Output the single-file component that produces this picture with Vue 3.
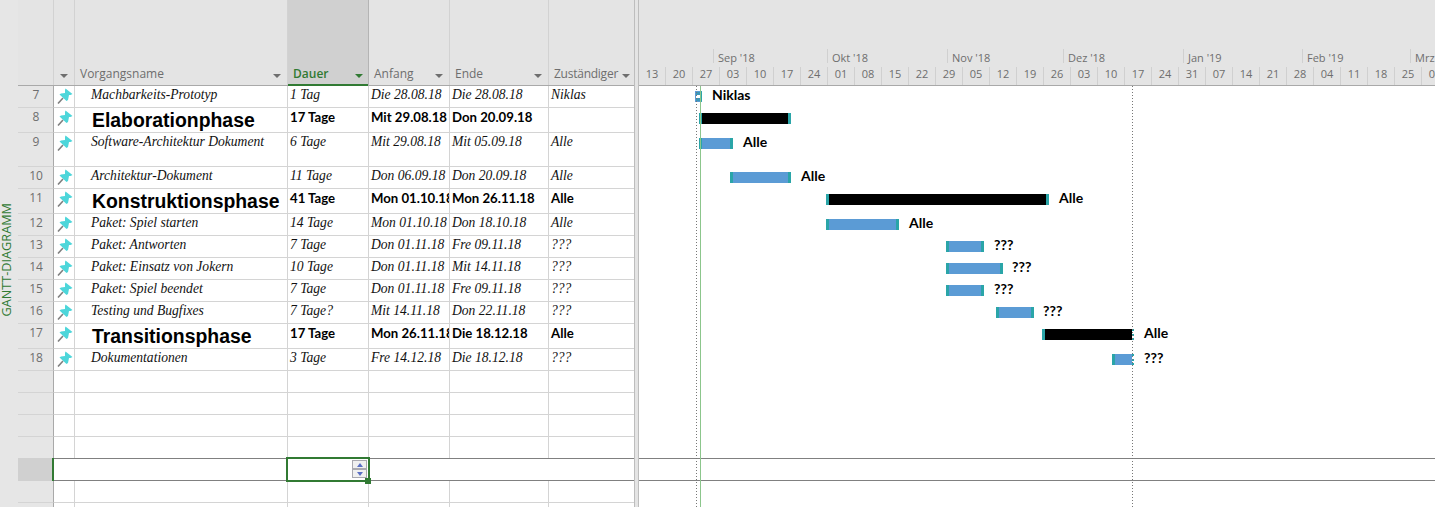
<script setup>
const columns = [
  { key: 'name', label: 'Vorgangsname' },
  { key: 'dauer', label: 'Dauer', active: true },
  { key: 'anfang', label: 'Anfang' },
  { key: 'ende', label: 'Ende' },
  { key: 'who', label: 'Zuständiger' }
]

const rows = [
  { id: 7, h: 22, name: 'Machbarkeits-Prototyp', dauer: '1 Tag', anfang: 'Die 28.08.18', ende: 'Die 28.08.18', who: 'Niklas', milestone: 695, label: 712, text: 'Niklas' },
  { id: 8, h: 25, phase: true, name: 'Elaborationphase', dauer: '17 Tage', anfang: 'Mit 29.08.18', ende: 'Don 20.09.18', who: '', from: 699, to: 791 },
  { id: 9, h: 34, name: 'Software-Architektur Dokument', dauer: '6 Tage', anfang: 'Mit 29.08.18', ende: 'Mit 05.09.18', who: 'Alle', from: 699, to: 733, label: 743, text: 'Alle' },
  { id: 10, h: 22, name: 'Architektur-Dokument', dauer: '11 Tage', anfang: 'Don 06.09.18', ende: 'Don 20.09.18', who: 'Alle', from: 730, to: 791, label: 801, text: 'Alle' },
  { id: 11, h: 25, phase: true, name: 'Konstruktionsphase', dauer: '41 Tage', anfang: 'Mon 01.10.18', ende: 'Mon 26.11.18', who: 'Alle', from: 826, to: 1049, label: 1059, text: 'Alle' },
  { id: 12, h: 22, name: 'Paket: Spiel starten', dauer: '14 Tage', anfang: 'Mon 01.10.18', ende: 'Don 18.10.18', who: 'Alle', from: 826, to: 899, label: 909, text: 'Alle' },
  { id: 13, h: 22, name: 'Paket: Antworten', dauer: '7 Tage', anfang: 'Don 01.11.18', ende: 'Fre 09.11.18', who: '???', from: 946, to: 984, label: 994, text: '???' },
  { id: 14, h: 22, name: 'Paket: Einsatz von Jokern', dauer: '10 Tage', anfang: 'Don 01.11.18', ende: 'Mit 14.11.18', who: '???', from: 946, to: 1003, label: 1012, text: '???' },
  { id: 15, h: 22, name: 'Paket: Spiel beendet', dauer: '7 Tage', anfang: 'Don 01.11.18', ende: 'Fre 09.11.18', who: '???', from: 946, to: 984, label: 994, text: '???' },
  { id: 16, h: 22, name: 'Testing und Bugfixes', dauer: '7 Tage?', anfang: 'Mit 14.11.18', ende: 'Don 22.11.18', who: '???', from: 996, to: 1034, label: 1043, text: '???' },
  { id: 17, h: 25, phase: true, name: 'Transitionsphase', dauer: '17 Tage', anfang: 'Mon 26.11.18', ende: 'Die 18.12.18', who: 'Alle', from: 1042, to: 1134, cut: true, label: 1144, text: 'Alle' },
  { id: 18, h: 22, name: 'Dokumentationen', dauer: '3 Tage', anfang: 'Fre 14.12.18', ende: 'Die 18.12.18', who: '???', from: 1112, to: 1134, cut: true, label: 1144, text: '???' }
]

const emptyBefore = [1, 2, 3, 4]
const emptyAfter = [1, 2]

const months = [
  { label: "Sep '18", w: 114 },
  { label: "Okt '18", w: 120 },
  { label: "Nov '18", w: 116 },
  { label: "Dez '18", w: 120 },
  { label: "Jan '19", w: 119 },
  { label: "Feb '19", w: 108 },
  { label: "Mrz '19", w: 60 }
]

const weeks = ['13', '20', '27', '03', '10', '17', '24', '01', '08', '15', '22', '29', '05', '12', '19', '26', '03', '10', '17', '24', '31', '07', '14', '21', '28', '04', '11', '18', '25', '04']

const CHART_X = 639
</script>

<template>
  <div class="page">
    <div class="rail"><span class="view-name">GANTT-DIAGRAMM</span></div>

    <div class="sheet">
      <div class="cols head">
        <div class="hcell"></div>
        <div class="hcell ind"><i class="arrow"></i></div>
        <div
          v-for="col in columns"
          :key="col.key"
          class="hcell"
          :class="[col.key, { active: col.active }]"
        >
          <span>{{ col.label }}</span><i class="arrow"></i>
        </div>
      </div>

      <div
        v-for="row in rows"
        :key="row.id"
        class="cols row"
        :class="{ phase: row.phase }"
        :style="{ height: row.h + 'px' }"
      >
        <div class="cell num">{{ row.id }}</div>
        <div class="cell ind">
          <svg class="pin" width="16" height="16" viewBox="0 0 16 16">
            <path d="M1 15.5 L6 10" stroke="#7f7f7f" stroke-width="1.6" fill="none" />
            <path d="M8.5 0.5 L15.5 6 L13.5 7 L12 7 L11 12 L9.5 13 L2.5 6.5 L4 5.5 L8 5 L8 2 Z" fill="#4dd6da" />
          </svg>
        </div>
        <div class="cell name"><span>{{ row.name }}</span></div>
        <div class="cell">{{ row.dauer }}</div>
        <div class="cell">{{ row.anfang }}</div>
        <div class="cell">{{ row.ende }}</div>
        <div class="cell">{{ row.who }}</div>
      </div>

      <div v-for="n in emptyBefore" :key="'b' + n" class="cols row empty">
        <div class="cell num"></div>
        <div class="cell ind"></div>
        <div class="cell"></div>
        <div class="cell"></div>
        <div class="cell"></div>
        <div class="cell"></div>
        <div class="cell"></div>
      </div>

      <div class="selected">
        <div class="sel-num"></div>
        <div class="sel-main"></div>
        <div class="sel-box">
          <div class="spin">
            <button class="spin-btn"><i class="up"></i></button>
            <button class="spin-btn"><i class="down"></i></button>
          </div>
          <i class="handle"></i>
        </div>
      </div>

      <div v-for="n in emptyAfter" :key="'a' + n" class="cols row empty">
        <div class="cell num"></div>
        <div class="cell ind"></div>
        <div class="cell"></div>
        <div class="cell"></div>
        <div class="cell"></div>
        <div class="cell"></div>
        <div class="cell"></div>
      </div>
    </div>

    <div class="splitter"></div>

    <div class="chart">
      <div class="scale">
        <div class="months">
          <div
            v-for="m in months"
            :key="m.label"
            class="month"
            :style="{ width: m.w + 'px' }"
          >{{ m.label }}</div>
        </div>
        <div class="weeks">
          <div v-for="(w, i) in weeks" :key="i" class="week">{{ w }}</div>
        </div>
      </div>

      <div class="plot">
        <div
          v-for="row in rows"
          :key="row.id"
          class="lane"
          :style="{ height: row.h + 'px' }"
        >
          <div
            v-if="row.milestone"
            class="ms"
            :style="{ left: row.milestone - CHART_X + 'px' }"
          ></div>
          <div
            v-if="row.from"
            class="bar"
            :class="{ summary: row.phase, cut: row.cut }"
            :style="{ left: row.from - CHART_X + 'px', width: row.to - row.from + 'px' }"
          ></div>
          <span
            v-if="row.text"
            class="bar-label"
            :style="{ left: row.label - CHART_X + 'px' }"
          >{{ row.text }}</span>
        </div>

        <div class="lane-empty"></div>
        <div class="lane-selected"></div>

        <i class="status s1"></i>
        <i class="status s2"></i>
        <i class="today"></i>
      </div>
    </div>
  </div>
</template>

<style scoped>
.page {
  display: flex;
  width: 1435px;
  height: 507px;
  overflow: hidden;
  background: #fff;
  font-family: "Open Sans", "Liberation Sans", sans-serif;
}

.rail {
  width: 18px;
  flex: none;
  background: #e6e6e6;
  padding-top: 203px;
  box-sizing: border-box;
}

.view-name {
  display: block;
  writing-mode: vertical-rl;
  transform: rotate(180deg);
  width: 12px;
  font-size: 12.7px;
  line-height: 12px;
  font-weight: 500;
  color: #317a33;
  white-space: nowrap;
}

.sheet {
  width: 616px;
  flex: none;
}

.cols {
  display: grid;
  grid-template-columns: 36px 21px 213px 81px 81px 99px 85px;
}

.head {
  height: 86px;
  background: #e4e4e4;
  border-bottom: 1px solid #a9a9a9;
  box-sizing: border-box;
}

.hcell {
  position: relative;
  box-sizing: border-box;
  border-right: 1px solid #d2d2d2;
  color: #6e6e6e;
  font-size: 12px;
  line-height: 16px;
  padding: 0 0 3px 5px;
  display: flex;
  align-items: flex-end;
  justify-content: space-between;
  min-width: 0;
}

.hcell:last-child {
  border-right: 0;
}

.hcell.ind {
  justify-content: center;
  padding-left: 0;
}

.hcell.who {
  padding-left: 5px;
  letter-spacing: -0.25px;
}

.hcell.active {
  background: #d0d0d0;
  color: #317a33;
  font-weight: 600;
  border-right-color: #b4b4b4;
  box-shadow: inset 0 -2px 0 #317a33;
  margin-bottom: -1px;
  padding-bottom: 4px;
}

.arrow {
  width: 0;
  height: 0;
  border-left: 4px solid transparent;
  border-right: 4px solid transparent;
  border-top: 4px solid #6e6e6e;
  margin: 0 6px 4px 0;
  flex: none;
}

.hcell.ind .arrow {
  margin: 0 0 4px 0;
}

.hcell.who .arrow {
  margin-right: 4px;
}

.hcell.active .arrow {
  border-top-color: #317a33;
  margin-right: 5px;
}

.row {
  box-sizing: border-box;
  height: 22px;
}

.empty {
  height: 22px;
}

.cell {
  box-sizing: border-box;
  border-right: 1px solid #d4d4d4;
  border-bottom: 1px solid #d4d4d4;
  padding-left: 2px;
  overflow: hidden;
  white-space: nowrap;
  font-family: "Liberation Serif", "Times New Roman", serif;
  font-style: italic;
  font-size: 13.6px;
  line-height: 18px;
  color: #111;
}

.cell:last-child {
  border-right: 0;
}

.phase .cell {
  font-family: "Lato", "Open Sans", sans-serif;
  font-style: normal;
  font-weight: 700;
  font-size: 13.2px;
  line-height: 19px;
  color: #000;
}

.phase .cell.num,
.cell.num {
  background: #e6e6e6;
  border-right-color: #a9a9a9;
  font-family: "Open Sans", sans-serif;
  font-style: normal;
  font-weight: 400;
  font-size: 12px;
  line-height: 18px;
  text-align: center;
  color: #6e6e6e;
  padding: 0 0 0 1px;
}

.cell.ind {
  padding: 2px 0 0 3px;
}

.pin {
  display: block;
}

.cell.name {
  padding-left: 16px;
}

.phase .cell.name {
  padding-left: 17px;
  font-family: "Liberation Sans", Arial, sans-serif;
  font-size: 19.4px;
  line-height: 25px;
}

.selected {
  position: relative;
  display: flex;
  height: 23px;
  margin-top: -1px;
}

.sel-num {
  width: 36px;
  flex: none;
  background: #d0d0d0;
  border-right: 2px solid #317a33;
  box-sizing: border-box;
}

.sel-main {
  flex: 1;
  border-top: 1px solid #808080;
  border-bottom: 1px solid #808080;
}

.sel-box {
  position: absolute;
  left: 268px;
  top: -1px;
  width: 84px;
  height: 25px;
  border: 2px solid #317a33;
  box-sizing: border-box;
}

.spin {
  position: absolute;
  right: 1px;
  top: 1px;
  display: flex;
  flex-direction: column;
}

.spin-btn {
  display: flex;
  align-items: center;
  justify-content: center;
  width: 15px;
  height: 9px;
  padding: 0;
  background: #f0f0f0;
  border: 1px solid #a9a9b0;
  box-sizing: border-box;
}

.up,
.down {
  width: 0;
  height: 0;
  border-left: 3px solid transparent;
  border-right: 3px solid transparent;
}

.up {
  border-bottom: 4px solid #5a6fc4;
}

.down {
  border-top: 4px solid #5a6fc4;
}

.handle {
  position: absolute;
  right: -3px;
  bottom: -4px;
  width: 6px;
  height: 6px;
  background: #317a33;
}

.splitter {
  width: 5px;
  flex: none;
  box-sizing: border-box;
  background: #e4e4e4;
  border-left: 1px solid #bdbdbd;
  border-right: 1px solid #bdbdbd;
}

.chart {
  flex: 1;
  min-width: 0;
  overflow: hidden;
}

.scale {
  height: 86px;
  box-sizing: border-box;
  background: #e4e4e4;
  border-bottom: 1px solid #a9a9a9;
  padding-top: 49px;
}

.months {
  display: flex;
  height: 17px;
  padding-left: 74px;
  white-space: nowrap;
}

.month {
  flex: none;
  height: 14px;
  box-sizing: border-box;
  border-left: 1px solid #d0d0d0;
  padding-left: 4px;
  font-size: 11px;
  line-height: 18px;
  color: #6e6e6e;
}

.weeks {
  display: flex;
  padding-top: 1px;
}

.week {
  flex: none;
  width: 27px;
  height: 18px;
  box-sizing: border-box;
  border-right: 1px solid #d0d0d0;
  text-align: center;
  font-size: 11px;
  line-height: 14px;
  color: #6e6e6e;
}

.plot {
  position: relative;
}

.today,
.status {
  position: absolute;
  top: 0;
  height: 421px;
  width: 1px;
}

.today {
  left: 61px;
  background: #8cc68c;
}

.status {
  background: repeating-linear-gradient(#777 0 1px, transparent 1px 3px);
}

.s1 {
  left: 57px;
}

.s2 {
  left: 493px;
}

.lane {
  position: relative;
}

.bar {
  position: absolute;
  top: 5px;
  height: 11px;
  background: #5b9bd5;
  background-clip: padding-box;
  border-left: 3px solid #2aa5a8;
  border-right: 3px solid #2aa5a8;
  box-sizing: border-box;
}

.bar.summary {
  background: #000;
  background-clip: padding-box;
}

.bar.cut {
  border-right: 2px dotted #2aa5a8;
}

.ms {
  position: absolute;
  top: 5px;
  width: 7px;
  height: 11px;
  box-sizing: border-box;
  border: 1px solid #5b9bd5;
  border-right: 2px solid #2aa5a8;
  background: linear-gradient(#3c97b8 0 3px, #fff 3px 6px, #3c97b8 6px);
}

.bar-label {
  position: absolute;
  top: -1px;
  font-family: "Lato", "Open Sans", sans-serif;
  font-weight: 700;
  font-size: 14px;
  line-height: 19px;
  color: #000;
  white-space: nowrap;
}

.lane-empty {
  height: 87px;
}

.lane-selected {
  height: 23px;
  box-sizing: border-box;
  border-top: 1px solid #808080;
  border-bottom: 1px solid #808080;
}
</style>

<style>
html,
body {
  margin: 0;
  background: #fff;
}
</style>
